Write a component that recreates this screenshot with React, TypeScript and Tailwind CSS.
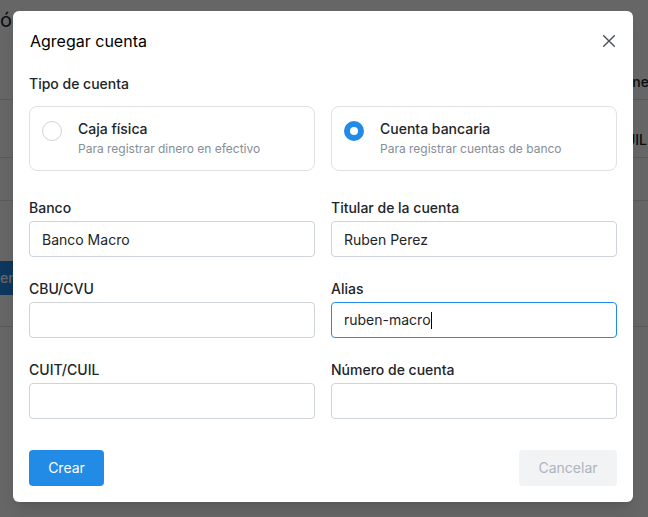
import React from 'react'

function RadioCard({ title, hint, checked }: { title: string; hint: string; checked?: boolean }) {
  return (
    <div className="flex h-[65px] items-start gap-4 rounded-lg border border-[#dee2e6] bg-white px-3 pt-[11px]">
      {checked ? (
        <span className="mt-[3px] flex h-5 w-5 shrink-0 items-center justify-center rounded-full bg-[#228be6]">
          <span className="h-2 w-2 rounded-full bg-white" />
        </span>
      ) : (
        <span className="mt-[3px] h-5 w-5 shrink-0 rounded-full border border-[#ced4da] bg-white" />
      )}
      <div className="flex flex-col">
        <span className="text-sm font-medium leading-[1.55] text-[#212529]">{title}</span>
        <span className="text-xs leading-[1.55] text-[#868e96]">{hint}</span>
      </div>
    </div>
  )
}

function Field({ label, value }: { label: string; value?: string }) {
  return (
    <div className="flex flex-col">
      <label className="text-sm font-medium leading-[22px] text-[#212529]">{label}</label>
      <input
        readOnly
        defaultValue={value ?? ''}
        className="mt-[2px] h-9 w-full rounded border border-[#ced4da] bg-white px-3 text-sm text-[#212529] outline-none"
      />
    </div>
  )
}

export default function App() {
  return (
    <div className="relative h-[517px] w-[648px] overflow-hidden bg-white font-[Inter,sans-serif] text-[#212529]">
      {/* page behind the modal */}
      <div className="flex h-[100px] flex-col justify-between border-b border-[#dee2e6]">
        <div className="pt-[6px] text-xl leading-7">ón</div>
        <div className="mb-[7px] flex justify-end text-sm font-medium">
          <span className="-mr-[1px]">ne</span>
        </div>
      </div>
      <div className="flex h-[58px] justify-end border-b border-[#dee2e6] pt-[30px] text-sm font-medium">
        <span className="mr-[1px]">UIL</span>
      </div>
      <div className="h-[43px] border-b border-[#dee2e6]" />
      <div className="h-[126px] border-b border-[#dee2e6] pt-[60px]">
        <div className="flex h-[34px] w-[40px] items-center rounded-r bg-[#228be6] text-sm font-medium text-white">
          en
        </div>
      </div>

      {/* overlay + modal */}
      <div className="absolute inset-0 bg-black/60 pl-[13px] pt-[11px]">
        <div className="w-[620px] rounded-md bg-white shadow-lg">
          <div className="flex h-[60px] items-center justify-between px-4">
            <h2 className="pl-[1px] text-base font-normal text-black">Agregar cuenta</h2>
            <button className="flex h-4 w-4 items-center justify-center text-[#495057]">
              <svg width="12" height="12" viewBox="0 0 12 12" fill="none" stroke="currentColor" strokeWidth="1.4" strokeLinecap="round">
                <path d="M0.7 0.7L11.3 11.3M11.3 0.7L0.7 11.3" />
              </svg>
            </button>
          </div>

          <div className="px-4 pb-4">
            <p className="mt-[3px] text-sm font-medium leading-5">Tipo de cuenta</p>
            <div className="mt-3 grid grid-cols-2 gap-4">
              <RadioCard title="Caja física" hint="Para registrar dinero en efectivo" />
              <RadioCard title="Cuenta bancaria" hint="Para registrar cuentas de banco" checked />
            </div>

            <div className="mt-[26px] grid grid-cols-2 gap-x-4 gap-y-[21px]">
              <Field label="Banco" value="Banco Macro" />
              <Field label="Titular de la cuenta" value="Ruben Perez" />
              <Field label="CBU/CVU" />
              <div className="flex flex-col">
                <label className="text-sm font-medium leading-[22px]">Alias</label>
                <div className="mt-[2px] flex h-9 items-center rounded border border-[#228be6] bg-white px-3 text-sm">
                  <span>ruben-macro</span>
                  <span className="h-[17px] w-px bg-black" />
                </div>
              </div>
              <Field label="CUIT/CUIL" />
              <Field label="Número de cuenta" />
            </div>

            <div className="mt-[31px] flex items-center justify-between">
              <button className="h-9 w-[75px] rounded bg-[#228be6] text-sm font-normal text-white">Crear</button>
              <button className="h-9 w-[98px] rounded bg-[#f1f3f5] text-sm font-normal text-[#adb5bd]">Cancelar</button>
            </div>
          </div>
        </div>
      </div>
    </div>
  )
}
